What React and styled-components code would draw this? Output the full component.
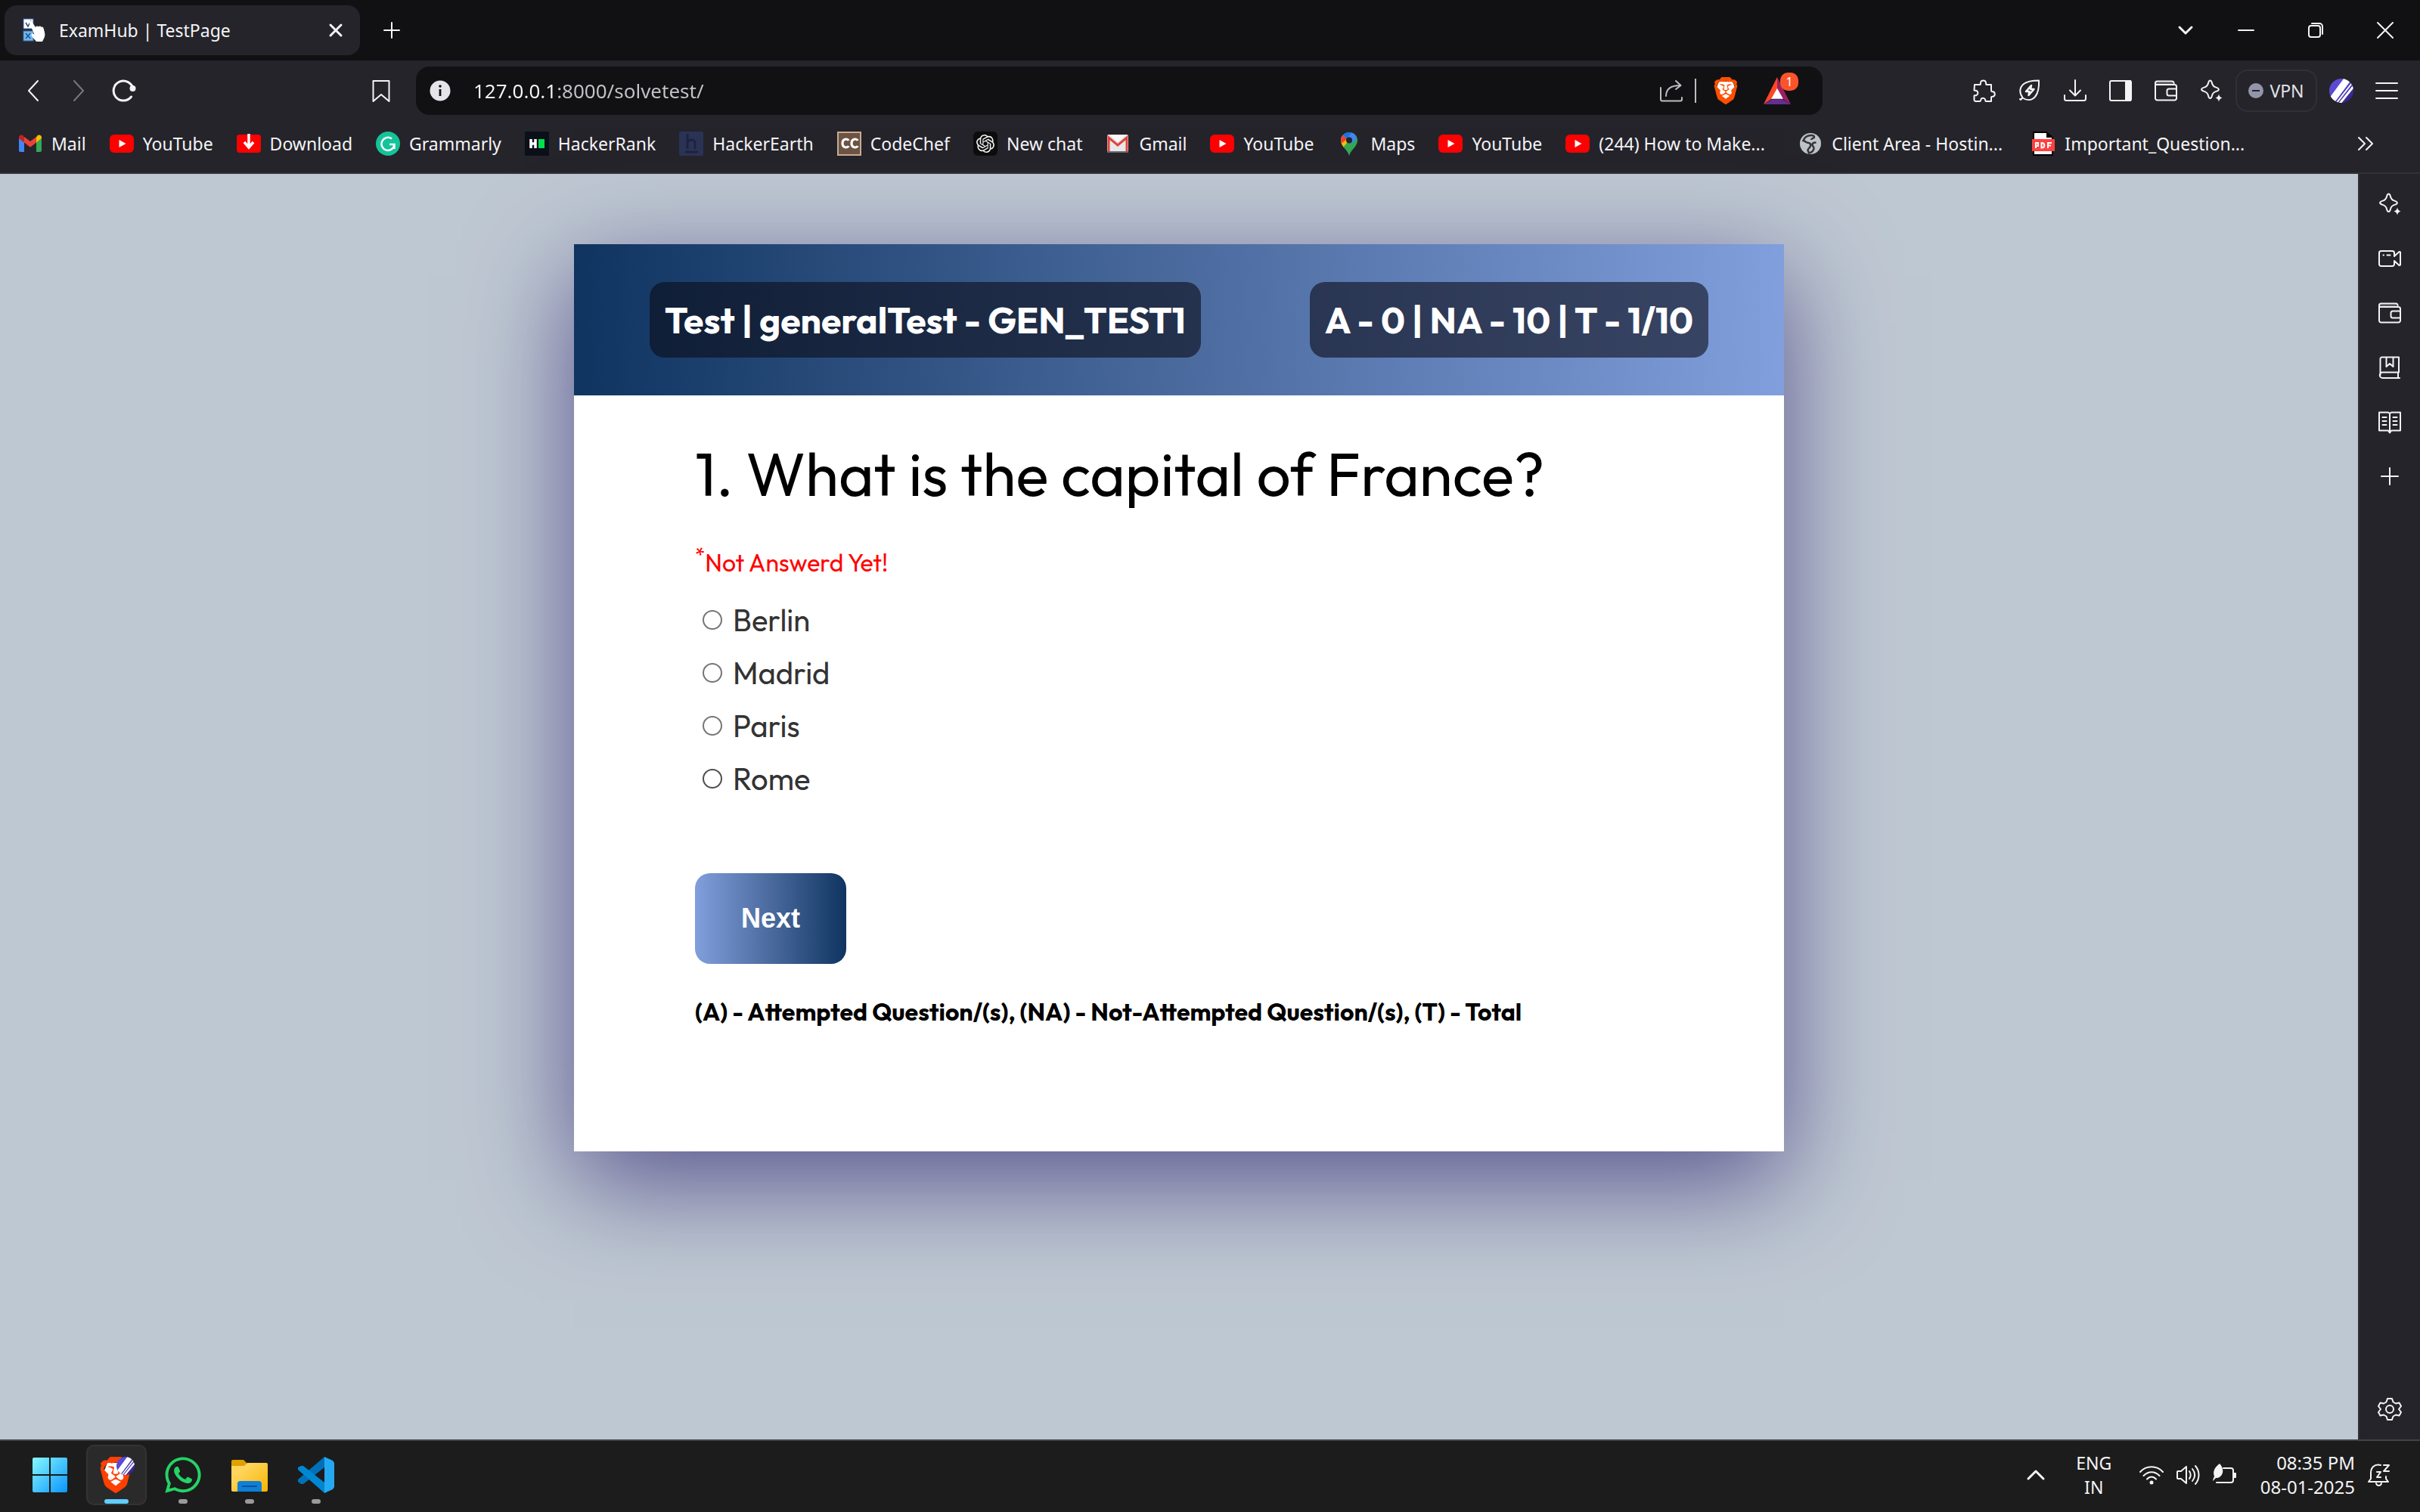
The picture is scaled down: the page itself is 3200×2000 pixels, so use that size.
import React from "react";
import styled, { createGlobalStyle } from "styled-components";
import { SiBrave, SiOpenai } from "react-icons/si";
import { FaWhatsapp } from "react-icons/fa";

const uiFont = `"Segoe UI", "Noto Sans", "Open Sans", sans-serif`;
const pageFont = `"Outfit", "Lato", sans-serif`;

const GlobalStyle = createGlobalStyle`
  *, *::before, *::after { box-sizing: border-box; }
  body { margin: 0; background: #111113; }
  button, input { font: inherit; }
  svg { display: block; flex: none; }
`;

const Screen = styled.div`
  min-height: 100vh;
  display: flex;
  flex-direction: column;
  font-family: ${uiFont};
  font-size: 23px;
  color: #f4f4f6;
`;

/* ---------- tab strip ---------- */

const TabStrip = styled.header`
  display: flex;
  align-items: center;
  height: 80px;
  padding-left: 6px;
  background: #111113;
`;

const Tab = styled.div`
  display: flex;
  align-items: center;
  gap: 16px;
  width: 470px;
  height: 66px;
  padding: 0 16px 0 24px;
  border-radius: 16px;
  background: #25242a;
`;

const TabTitle = styled.span`
  flex: 1;
  white-space: nowrap;
`;

const IconButton = styled.button`
  display: flex;
  align-items: center;
  justify-content: center;
  width: ${(p) => p.$w || 60}px;
  height: ${(p) => p.$h || 60}px;
  padding: 0;
  border: 0;
  background: none;
  color: ${(p) => p.$color || "#f4f4f6"};
`;

const WindowButtons = styled.div`
  display: flex;
  margin-left: auto;
`;

/* ---------- toolbar ---------- */

const Toolbar = styled.div`
  display: grid;
  grid-template-columns: 550px minmax(0, 1fr) 790px;
  align-items: center;
  height: 80px;
  background: #25242a;
`;

const NavButtons = styled.div`
  display: flex;
  padding: 0 16px 0 14px;
`;

const PushRight = styled.div`
  margin-left: auto;
`;

const AddressBar = styled.div`
  display: flex;
  align-items: center;
  height: 64px;
  padding: 0 42px 0 18px;
  border-radius: 18px;
  background: #111113;
`;

const AddressInput = styled.input`
  flex: 1;
  min-width: 0;
  height: 48px;
  margin-left: 30px;
  padding: 0;
  border: 0;
  outline: 0;
  font-family: ${uiFont};
  font-size: 26px;
  color: transparent;
  background: linear-gradient(90deg, #f6f6f8 0 112px, #c4c4c8 112px);
  -webkit-background-clip: text;
  background-clip: text;
`;

const Divider = styled.span`
  width: 2px;
  height: 32px;
  margin: 0 21px 0 15px;
  background: #bdbdc2;
`;

const Rewards = styled.button`
  position: relative;
  padding: 0;
  margin-left: 32px;
  border: 0;
  background: none;
`;

const Badge = styled.span`
  position: absolute;
  top: -6px;
  right: -10px;
  width: 24px;
  height: 24px;
  border-radius: 10px;
  background: #fb542b;
  color: #fff;
  font-size: 16px;
  line-height: 24px;
  text-align: center;
`;

const Actions = styled.div`
  display: flex;
  align-items: center;
  justify-content: flex-end;
`;

const VpnButton = styled.button`
  display: flex;
  align-items: center;
  justify-content: center;
  gap: 8px;
  width: 108px;
  height: 56px;
  padding: 0;
  margin: 0 16px 0 2px;
  border: 2px solid #303036;
  border-radius: 16px;
  background: none;
  color: #e2e2e8;
`;

/* ---------- bookmarks ---------- */

const Bookmarks = styled.nav`
  display: flex;
  align-items: center;
  gap: 31px;
  height: 70px;
  padding: 0 56px 8px 24px;
  border-bottom: 2px solid #323137;
  background: #25242a;
`;

const Bookmark = styled.a`
  display: flex;
  align-items: center;
  gap: 12px;
  min-width: ${(p) => (p.$truncated ? "277px" : "0")};
  color: inherit;
  text-decoration: none;
  white-space: nowrap;
`;

/* ---------- page area ---------- */

const Middle = styled.div`
  flex: 1;
  display: flex;
`;

const Page = styled.main`
  flex: 1;
  padding: 93px 40px;
  background: #bec8d2;
  font-family: ${pageFont};
  color: #000;
`;

const SideBar = styled.aside`
  display: flex;
  flex-direction: column;
  align-items: center;
  width: 82px;
  padding: 4px 0;
  border-left: 2px solid #323137;
  background: #25242a;
`;

const Spacer = styled.div`
  flex: 1;
`;

const Card = styled.section`
  max-width: 1600px;
  min-height: 1200px;
  margin: 0 auto;
  background: #fff;
  box-shadow: 0 40px 130px #59548e;
`;

const CardHeader = styled.header`
  display: flex;
  align-items: center;
  justify-content: space-between;
  height: 200px;
  padding: 0 100px;
  background: linear-gradient(90deg, #0f3460, #4a6a9e 50%, #819fdc);
`;

const Pill = styled.h2`
  margin: 0;
  padding: 0 20px;
  border-radius: 20px;
  background: rgba(11, 11, 23, 0.6);
  color: #fff;
  font-size: 48px;
  font-weight: 700;
  line-height: 100px;
  white-space: nowrap;
`;

const Question = styled.form`
  padding: 54px 160px;
`;

const QuestionText = styled.h1`
  margin: 0 0 46px;
  font-size: 80px;
  font-weight: 400;
  line-height: 100px;
`;

const Status = styled.p`
  margin: 0 0 20px;
  font-size: 32px;
  line-height: 42px;
  color: #f00;

  sup {
    font-size: 27px;
    line-height: 0;
  }
`;

const Option = styled.label`
  display: flex;
  align-items: center;
  gap: 14px;
  height: 70px;
  padding-left: 10px;
  font-size: 40px;
  line-height: 50px;
  color: #333;
`;

const Radio = styled.input`
  appearance: none;
  width: 26px;
  height: 26px;
  margin: 0;
  border: 2px solid ${(p) => (p.$hovered ? "#4f4f4f" : "#767676")};
  border-radius: 50%;
  background: #fff;
`;

const NextButton = styled.button`
  display: block;
  width: 200px;
  height: 120px;
  margin: 90px 0 42px;
  border: 0;
  border-radius: 20px;
  background: linear-gradient(90deg, #819fdc, #4a6a9e 50%, #0f3460);
  color: #fff;
  font-family: "Liberation Sans", Arial, sans-serif;
  font-size: 36px;
  font-weight: 700;
`;

const Legend = styled.p`
  margin: 0;
  font-size: 32px;
  font-weight: 700;
  line-height: 42px;
`;

/* ---------- taskbar ---------- */

const TaskBar = styled.footer`
  display: flex;
  align-items: center;
  justify-content: space-between;
  height: 96px;
  padding: 0 38px 4px 26px;
  border-top: 2px solid #434343;
  background: #1c1c1c;
`;

const Apps = styled.div`
  display: flex;
  gap: 8px;
`;

const AppButton = styled.button`
  position: relative;
  display: flex;
  align-items: center;
  justify-content: center;
  width: 80px;
  height: 80px;
  padding: 0;
  border: 2px solid ${(p) => (p.$active ? "#333" : "transparent")};
  border-radius: 10px;
  background: ${(p) => (p.$active ? "#2a2a2a" : "none")};
`;

const Running = styled.span`
  position: absolute;
  bottom: 0;
  width: ${(p) => (p.$active ? 32 : 12)}px;
  height: 6px;
  border-radius: 3px;
  background: ${(p) => (p.$active ? "#60cdff" : "#9a9a9a")};
`;

const Tray = styled.div`
  display: flex;
  align-items: center;
  line-height: 32px;
`;

const Language = styled.div`
  width: 60px;
  margin: 0 30px 0 31px;
  text-align: center;
`;

const TrayIcons = styled.div`
  display: flex;
  gap: 16px;
  margin-right: 32px;
`;

const Clock = styled.time`
  margin-right: 16px;
  font-size: 24px;
  text-align: right;
`;

/* ---------- icons ---------- */

const Line = ({ size = 32, w = 2, children, color = "currentColor" }) => (
  <svg width={size} height={size} viewBox="0 0 32 32" fill="none" stroke={color} strokeWidth={w} strokeLinecap="round" strokeLinejoin="round" aria-hidden="true">
    {children}
  </svg>
);

const Plain = ({ size = 32, box = 32, children }) => (
  <svg width={size} height={size} viewBox={`0 0 ${box} ${box}`} aria-hidden="true">
    {children}
  </svg>
);

const CloseIcon = ({ s = 6, w = 2 }) => (
  <Line w={w}><path d={`M${16 - s} ${16 - s}L${16 + s} ${16 + s}M${16 + s} ${16 - s}L${16 - s} ${16 + s}`} /></Line>
);
const PlusIcon = ({ s = 11 }) => <Line><path d={`M16 ${16 - s}V${16 + s}M${16 - s} 16H${16 + s}`} /></Line>;
const SparkleIcon = () => (
  <Line>
    <path d="M14.500 2.500c1.300 0 1.900 1 2.400 3.200.8 3.600 2.200 5 5.500 5.900 2.300.6 3.400 1.400 3.400 2.700s-1.100 2-3.400 2.600c-3.300.9-4.700 2.300-5.500 6-.5 2.200-1.100 3.200-2.400 3.200s-1.900-1-2.400-3.200c-.8-3.700-2.200-5.100-5.500-6-2.300-.6-3.500-1.300-3.500-2.600s1.200-2.100 3.500-2.700c3.300-.9 4.700-2.300 5.500-5.900.5-2.200 1.100-3.200 2.400-3.200z" />
    <path d="M26 20.500c.8 3 1.700 4.200 4.500 5-2.800.8-3.700 2-4.500 5-.8-3-1.700-4.200-4.500-5 2.800-.8 3.700-2 4.500-5z" fill="currentColor" stroke="none" />
  </Line>
);
const WalletIcon = () => (
  <Line>
    <path d="M2 8v18a2.500 2.500 0 0 0 2.500 2.500h23A2.500 2.500 0 0 0 30 26V10.500A2.500 2.500 0 0 0 27.500 8H4.500A2 2 0 0 1 2 6a2.500 2.500 0 0 1 2.500-2.500H24a2.500 2.500 0 0 1 2.500 2.500v2M2 6v4M30 13.500H20a2.500 2.500 0 0 0-2.500 2.500v4a2.500 2.500 0 0 0 2.500 2.500h10" />
    <path d="M4 6h21" stroke="#56575c" />
  </Line>
);
const Globe = () => (
  <Plain>
    <circle cx="16" cy="16" r="14" fill="#bfc3c9" />
    <path d="M17 5c-5 0-9 3-10.500 7 3 .5 3.500 3 7 3 2 0 3 1.500 2.500 4-.5 3-3.500 3-3.500 6l1.500 3.500c4-1 6-3 6.500-6 .3-2.500-2-3-2-5.500 0-2 2-2.500 5-2.500M17 5c3 0 4 1 4 2.500s-4 1.500-4 3.500" fill="none" stroke="#33343a" strokeWidth="2.500" />
  </Plain>
);
const YouTube = () => (
  <Plain>
    <rect x="0" y="4" width="32" height="24" rx="6" fill="#f00" />
    <path d="M12.500 11l9 5-9 5z" fill="#fff" />
  </Plain>
);
const Mail = () => (
  <Plain>
    <path d="M1 9v16a2 2 0 0 0 2 2h5V14z" fill="#4285f4" />
    <path d="M31 9v16a2 2 0 0 1-2 2h-5V14z" fill="#34a853" />
    <path d="M24 7.500V14.500l7-5.500V8c0-3-3-4.500-5.500-2.700z" fill="#fbbc04" />
    <path d="M1 9l7 5.500V7.500L6.500 5.300C4 3.500 1 5 1 8z" fill="#c5221f" />
    <path d="M8 7v7.500l8 6.200 8-6.200V7l-8 6z" fill="#ea4335" />
  </Plain>
);
const DownloadTile = () => (
  <Plain>
    <rect y="4" width="32" height="24" rx="4" fill="#f00" />
    <path d="M16 3v17M10 14l6 7 6-7" fill="none" stroke="#fff" strokeWidth="3.500" />
  </Plain>
);
const Grammarly = () => (
  <Plain>
    <circle cx="16" cy="16" r="16" fill="#15c39a" />
    <path d="M21 9.500A8.500 8.500 0 1 0 24.500 17H18M24.500 17v6" fill="none" stroke="#fff" strokeWidth="2.500" />
  </Plain>
);
const HackerRank = () => (
  <Plain>
    <rect width="32" height="32" fill="#0b1018" />
    <path d="M8 10v12M14 10v12M8 16h6" stroke="#fff" strokeWidth="3.500" />
    <rect x="18" y="10" width="8" height="12" fill="#00e04f" />
  </Plain>
);
const HackerEarth = () => (
  <Plain>
    <rect width="32" height="32" rx="2" fill="#2c3454" />
    <path d="M11 3v20M11 14c2-4 10-4 10 1v8M8 27h17" fill="none" stroke="#1e2340" strokeWidth="3" />
  </Plain>
);
const CodeChef = () => (
  <Plain>
    <rect width="32" height="32" fill="#c9ac91" />
    <rect x="2" y="2" width="28" height="28" fill="#6d5443" />
    <path d="M15 12c-1-3-8-3-8 3.500s7 6.500 8 3.500M27 12c-1-3-8-3-8 3.500s7 6.500 8 3.500" fill="none" stroke="#fff" strokeWidth="3.200" />
  </Plain>
);
const ChatTile = styled.span`
  display: flex;
  padding: 4px;
  border-radius: 6px;
  background: #0d0d0d;
`;
const Gmail = () => (
  <Plain>
    <rect x="2" y="4" width="28" height="23" rx="2" fill="#e8e8ea" />
    <path d="M4 27V8l12 10L28 8v19" fill="none" stroke="#e0463c" strokeWidth="3" />
    <path d="M6 5h20l-10 9z" fill="#fafafa" />
    <path d="M2 27h28" stroke="#6a6a6e" strokeWidth="2" />
  </Plain>
);
const MapPin = () => (
  <Plain>
    <path d="M16 1C9.500 1 5 6 5 11.500c0 3 1 5.500 3.500 9C12 25 14.500 27 16 32c1.500-5 4-7 7.500-11.500 2.500-3.500 3.500-6 3.500-9C27 6 22.500 1 16 1z" fill="#34a853" />
    <path d="M7.700 4.700C6 6.600 5 9 5 11.500c0 3 1 5.500 3.500 9l9-11z" fill="#fbbc04" />
    <path d="M7.700 4.700C6 6.600 5 9 5 11.500c0 1.500.3 3 .9 4.300L14 9.500z" fill="#ea4335" />
    <path d="M7.700 4.700A11 11 0 0 1 19 1.400l-5.500 8.200z" fill="#1a73e8" />
    <path d="M19 1.400c3.500 1 6.200 3.600 7.300 6.800l-7 8.300-4.800-8.500z" fill="#4285f4" />
    <circle cx="16" cy="11.500" r="4" fill="#25242a" />
  </Plain>
);
const Pdf = () => (
  <Plain>
    <path d="M3 1h17l8 7v23H3z" fill="#fff" stroke="#000" strokeWidth="2" />
    <path d="M20 1v7h8z" fill="#000" />
    <rect x="1" y="10" width="30" height="16" fill="#ff4141" />
    <path d="M6 22v-7h3v4H6M13.500 15v6.500c5 0 5-6.500 0-6.500zM22 22v-7h5M22 18.500h4" fill="none" stroke="#fff" strokeWidth="2" />
  </Plain>
);
const BraveLogo = ({ size = 36, fill = "#ff4f00" }) => (
  <svg width={size} height={size} viewBox="0 0 24 24" aria-hidden="true">
    <path d="M6 4h12l2 5-3 10-5 4-5-4L4 9z" fill="#fff" />
    <SiBrave size={24} color={fill} />
  </svg>
);
const StripedDisc = ({ id }) => (
  <>
    <clipPath id={id}><circle cx="16" cy="16" r="16" /></clipPath>
    <linearGradient id={`${id}-fill`} x1="0" y1="0" x2="1" y2="1">
      <stop offset="0.300" stopColor="#5b4bd4" />
      <stop offset="1" stopColor="#2b1a78" />
    </linearGradient>
    <g clipPath={`url(#${id})`}>
      <rect width="32" height="32" fill={`url(#${id}-fill)`} />
      <path d="M4 28L24 1" stroke="#fff" strokeWidth="9" />
      <path d="M9 33L30 6" stroke="#fff" strokeWidth="2" />
      <path d="M13 34L34 8" stroke="#fff" strokeWidth="3" />
    </g>
  </>
);
const ExamHubIcon = () => (
  <Plain>
    <rect x="1" y="1" width="13" height="13" fill="#fff" stroke="#3b5fa8" />
    <path d="M4 6l3 5 4-8" fill="none" stroke="#2b4a86" strokeWidth="1.500" />
    <rect x="1" y="17" width="13" height="13" fill="#6fb9ee" stroke="#3d6fae" />
    <path d="M4 20l6 7M10 20l-6 7" stroke="#23508e" strokeWidth="1.500" />
    <path d="M9 4c2-1 3 0 4 2l4 6c1-2 3-2 4-.5 1-1.500 3-1 3.500.5 1.500-1 3 0 3.200 2 1.500 5 2.500 8 .8 12L26 31h-8c-2-3-6-6-6.500-9 0-2 2-2 4-.5L9.500 8C8.500 6 8 5 9 4z" fill="#fff" />
  </Plain>
);

const bookmarks = [
  ["Mail", <Mail />],
  ["YouTube", <YouTube />],
  ["Download", <DownloadTile />],
  ["Grammarly", <Grammarly />],
  ["HackerRank", <HackerRank />],
  ["HackerEarth", <HackerEarth />],
  ["CodeChef", <CodeChef />],
  ["New chat", <ChatTile><SiOpenai size={24} /></ChatTile>],
  ["Gmail", <Gmail />],
  ["YouTube", <YouTube />],
  ["Maps", <MapPin />],
  ["YouTube", <YouTube />],
  ["(244) How to Make...", <YouTube />],
  ["Client Area - Hostin...", <Globe />],
  ["Important_Question...", <Pdf />],
];

const toolbarActions = [
  ["Extensions", <Line><path d="M3 8h7c1.500 0 .5-1.500 1-3 .8-3.500 6.200-3.500 7 0 .5 1.500-.5 3 1 3h6v8c0 1.500 1 1 2.500 1.300 3 .9 3 5.500 0 6.400-1.500.3-2.500-.2-2.500 1.300v5h-7c-1 0-.5-1-1-2.500-.8-2.500-5-2.500-5.500 0-.5 1.500 0 2.500-1.500 2.500H4.500A2 2 0 0 1 2.500 28v-5c0-1.500 1.500-.5 3-1 2.500-1 2.500-5 0-6-1.500-.5-3 .5-3-1z" /></Line>],
  ["Energy saver", <Line><path d="M4 28l2.500-3C2 19 2 12 8 7c4.500-3.500 12-4.500 20-4.500.5 9-.5 16-5 21.500-4.500 5-11 5-16.500 1.500M4 28l-1-1" /><path d="M18 9l-7 8h4.500l-1 5 7-8H17z" strokeWidth="2.500" /></Line>],
  ["Downloads", <Line><path d="M16 2v20M9 15.500l7 7 7-7M2 22v4.500A2.500 2.500 0 0 0 4.500 29h23a2.500 2.500 0 0 0 2.500-2.500V22" /></Line>],
  ["Side panel", <Line><rect x="2" y="3" width="28" height="26" rx="2" /><path d="M23 3h6v26h-6z" fill="currentColor" /></Line>],
  ["Wallet", <WalletIcon />],
  ["Assistant", <SparkleIcon />],
];

const sidebarItems = [
  ["Leo", <SparkleIcon />],
  ["Talk", <Line><path d="M22 13V8.500A2.500 2.500 0 0 0 19.500 6H4.500A2.500 2.500 0 0 0 2 8.500v15A2.500 2.500 0 0 0 4.500 26h15a2.500 2.500 0 0 0 2.500-2.500V19l6.500 6 1.500-.5V7.500L28.500 7z" /><path d="M7.500 11.500h.5M12.500 11.500h4" /></Line>],
  ["Wallet", <WalletIcon />],
  ["Bookmarks", <Line><path d="M29 30H6.500a3.500 3.500 0 0 1 0-7.500H28V2.500H5.500a2 2 0 0 0-2 2V26M27 22.500V30M11.500 3v12l4.500-4 4.500 4V3" /></Line>],
  ["Reading list", <Line><path d="M16 5l-2-1.500H2v24h12l2 3 2-3h12v-24H18zV28M6.500 10h5M6.500 15h5M6.500 20h5M20.500 10h5M20.500 15h5M20.500 20h5" /></Line>],
  ["Add", <PlusIcon />],
];

const options = ["Berlin", "Madrid", "Paris", "Rome"];

export default function App() {
  return (
    <Screen>
      <GlobalStyle />
      <TabStrip>
        <Tab>
          <ExamHubIcon />
          <TabTitle>ExamHub | TestPage</TabTitle>
          <IconButton $w={32} aria-label="Close tab"><CloseIcon s={7} w={3} /></IconButton>
        </Tab>
        <IconButton $w={84} aria-label="New tab"><PlusIcon s={10} /></IconButton>
        <WindowButtons>
          <IconButton $w={68} aria-label="Search tabs"><Line w={3}><path d="M8 12l8 8 8-8" /></Line></IconButton>
          <IconButton $w={92} aria-label="Minimize"><Line w={2}><path d="M6 16h20" /></Line></IconButton>
          <IconButton $w={92} aria-label="Restore"><Line w={2}><rect x="7" y="10" width="15" height="15" rx="3" /><path d="M11 7h10a4 4 0 0 1 4 4v10" /></Line></IconButton>
          <IconButton $w={92} aria-label="Close window"><CloseIcon s={10} /></IconButton>
        </WindowButtons>
      </TabStrip>

      <Toolbar>
        <NavButtons>
          <IconButton aria-label="Back"><Line w={2}><path d="M22 3L10 16l12 13" /></Line></IconButton>
          <IconButton $color="#77777c" aria-label="Forward"><Line w={2}><path d="M10 3l12 13-12 13" /></Line></IconButton>
          <IconButton aria-label="Reload">
            <Line w={3}><path d="M28 14A13 13 0 1 0 25.500 24" /><circle cx="27.500" cy="13" r="3" fill="currentColor" strokeWidth="2" /></Line>
          </IconButton>
          <PushRight>
            <IconButton aria-label="Bookmark this page"><Line w={2}><path d="M5.500 3h21v27L16 21 5.500 30z" /></Line></IconButton>
          </PushRight>
        </NavButtons>
        <AddressBar>
          <Plain size={28} box={28}>
            <circle cx="14" cy="14" r="13.500" fill="#e4e4ea" />
            <circle cx="14" cy="8" r="1.800" fill="#111113" />
            <path d="M14 12v9" stroke="#111113" strokeWidth="2.800" />
          </Plain>
          <AddressInput aria-label="Address" defaultValue="127.0.0.1:8000/solvetest/" />
          <Line color="#bdbdc2"><path d="M2 12v15.500A2 2 0 0 0 4 29.500h24a2 2 0 0 0 2-2V25M9 23c0-8 4-14 19-14M22 3l6.500 6-6.500 5" /></Line>
          <Divider />
          <BraveLogo />
          <Rewards aria-label="Rewards">
            <Plain size={36}>
              <path d="M16 0L0 32l10-7 6-11z" fill="#ff4724" />
              <path d="M16 0l16 32-10-7-6-11z" fill="#9e1f63" />
              <path d="M0 32l10-6h12l10 6z" fill="#662d91" />
              <path d="M16 13l7 12.500H9z" fill="#fff" />
            </Plain>
            <Badge>1</Badge>
          </Rewards>
        </AddressBar>
        <Actions>
          {toolbarActions.map(([label, icon]) => (
            <IconButton key={label} aria-label={label}>{icon}</IconButton>
          ))}
          <VpnButton>
            <Plain size={20} box={20}>
              <circle cx="10" cy="10" r="10" fill="#9396aa" />
              <path d="M5 10h10" stroke="#25242a" strokeWidth="2" />
            </Plain>
            VPN
          </VpnButton>
          <Plain><StripedDisc id="profile" /></Plain>
          <IconButton aria-label="Menu" $w={88}><Line><path d="M2 6h28M2 16h28M2 26h28" /></Line></IconButton>
        </Actions>
      </Toolbar>

      <Bookmarks>
        {bookmarks.map(([label, icon], i) => (
          <Bookmark href="#" key={i} $truncated={label.endsWith("...")}>{icon}{label}</Bookmark>
        ))}
        <PushRight>
          <IconButton $w={32} aria-label="More bookmarks"><Line><path d="M7 8l8 8-8 8M17 8l8 8-8 8" /></Line></IconButton>
        </PushRight>
      </Bookmarks>

      <Middle>
        <Page>
          <Card>
            <CardHeader>
              <Pill>Test | generalTest - GEN_TEST1</Pill>
              <Pill>A - 0 | NA - 10 | T - 1/10</Pill>
            </CardHeader>
            <Question>
              <QuestionText>1. What is the capital of France?</QuestionText>
              <Status><sup>*</sup>Not Answerd Yet!</Status>
              {options.map((text, i) => (
                <Option key={text}>
                  <Radio type="radio" name="answer" value={text} $hovered={i === options.length - 1} />
                  {text}
                </Option>
              ))}
              <NextButton type="button">Next</NextButton>
              <Legend>(A) - Attempted Question/(s), (NA) - Not-Attempted Question/(s), (T) - Total</Legend>
            </Question>
          </Card>
        </Page>
        <SideBar>
          {sidebarItems.map(([label, icon]) => (
            <IconButton key={label} $h={72} aria-label={label}>{icon}</IconButton>
          ))}
          <Spacer />
          <IconButton $h={72} aria-label="Settings">
            <Line>
              <path d="M13 2h6l1.500 4.500L24 8.500l4.500-1 2.500 4.500-3 4 3 4-2.500 4.500-4.500-1-3.500 2L19 30h-6l-1.500-4.500L8 23.500l-4.500 1L1 20l3-4-3-4 2.500-4.500 4.500 1 3.500-2z" />
              <circle cx="16" cy="16" r="5" />
            </Line>
          </IconButton>
        </SideBar>
      </Middle>

      <TaskBar>
        <Apps>
          <AppButton aria-label="Start">
            <Plain size={46} box={46}>
              <linearGradient id="win" gradientUnits="userSpaceOnUse" x1="0" y1="0" x2="46" y2="46">
                <stop offset="0" stopColor="#85f8ff" />
                <stop offset="1" stopColor="#0a95ff" />
              </linearGradient>
              <path d="M2 0h20v22H0V2a2 2 0 0 1 2-2zM24 0h20a2 2 0 0 1 2 2v20H24zM0 24h22v22H2a2 2 0 0 1-2-2zM24 24h22v20a2 2 0 0 1-2 2H24z" fill="url(#win)" />
            </Plain>
          </AppButton>
          <AppButton $active aria-label="Brave">
            <Plain size={48} box={48}>
              <path d="M12 8h20l6 10-6 18-9 7-9-7-6-18z" fill="#fff" />
              <svg x="-1" y="0" width="48" height="48" viewBox="0 0 24 24"><SiBrave size={24} color="#ff4000" /></svg>
              <svg x="24" y="0" width="24" height="24" viewBox="0 0 32 32"><StripedDisc id="taskDisc" /></svg>
            </Plain>
            <Running $active />
          </AppButton>
          <AppButton aria-label="WhatsApp">
            <FaWhatsapp size={54} color="#25d366" />
            <Running />
          </AppButton>
          <AppButton aria-label="File Explorer">
            <Plain size={48} box={48}>
              <linearGradient id="folder" x1="0" y1="0" x2="1" y2="1">
                <stop offset="0.300" stopColor="#ffd45a" />
                <stop offset="1" stopColor="#f8b400" />
              </linearGradient>
              <path d="M0 6a2 2 0 0 1 2-2h14l5 5v6H0z" fill="#dfa000" />
              <path d="M0 12h17l4-4h25a2 2 0 0 1 2 2v34a2 2 0 0 1-2 2H2a2 2 0 0 1-2-2z" fill="url(#folder)" />
              <path d="M8 46V36a4 4 0 0 1 4-4h24a4 4 0 0 1 4 4v10z" fill="#0f7fd6" />
              <path d="M15 39h18" stroke="#0a4f9c" strokeWidth="2" strokeLinecap="round" />
            </Plain>
            <Running />
          </AppButton>
          <AppButton aria-label="Visual Studio Code">
            <Plain size={48} box={48}>
              <path d="M35 0v14L7 36l-3 0-4-3v-3z" fill="#0071b8" />
              <path d="M4 12h3l28 22v14L0 17v-3z" fill="#0087d1" />
              <path d="M35 0l11 5 2 3v32l-2 3-11 5z" fill="#24a8f2" />
            </Plain>
            <Running />
          </AppButton>
        </Apps>
        <Tray>
          <Line w={3}><path d="M6 21l10-10 10 10" /></Line>
          <Language>ENG<br />IN</Language>
          <TrayIcons>
            <Line><path d="M1 12c8-9 22-9 30 0M5.500 17c6-6.500 15-6.500 21 0M10 21.500c3.500-4 8.500-4 12 0" /><circle cx="16" cy="26" r="2.500" fill="currentColor" stroke="none" /></Line>
            <Line><path d="M2 12v8a1 1 0 0 0 1 1h4l7 6V5L7 11H3a1 1 0 0 0-1 1zM18 11c2 3 2 7 0 10M22 8c4 5 4 11 0 16M26 4c6 7 6 17 0 24" /></Line>
            <Line><path d="M15 7h10a3 3 0 0 1 3 3v13a3 3 0 0 1-3 3H6" /><path d="M28 14h3v5h-3z" fill="currentColor" /><path d="M10 1c5 5 6 13 1 17-2 2-5 2-6 2l-4 4c0-2 1-4 2-6C0 10 5 5 10 1z" fill="currentColor" stroke="none" /></Line>
          </TrayIcons>
          <Clock>08:35 PM<br />08-01-2025</Clock>
          <Line><path d="M18 3C9 1 5 7 5 13v8l-3 4h26l-3-4v-3M12 27c1 4 6 4 7 0M13 12h5l-5 7h5M22 3h7l-7 8h7" /></Line>
        </Tray>
      </TaskBar>
    </Screen>
  );
}
